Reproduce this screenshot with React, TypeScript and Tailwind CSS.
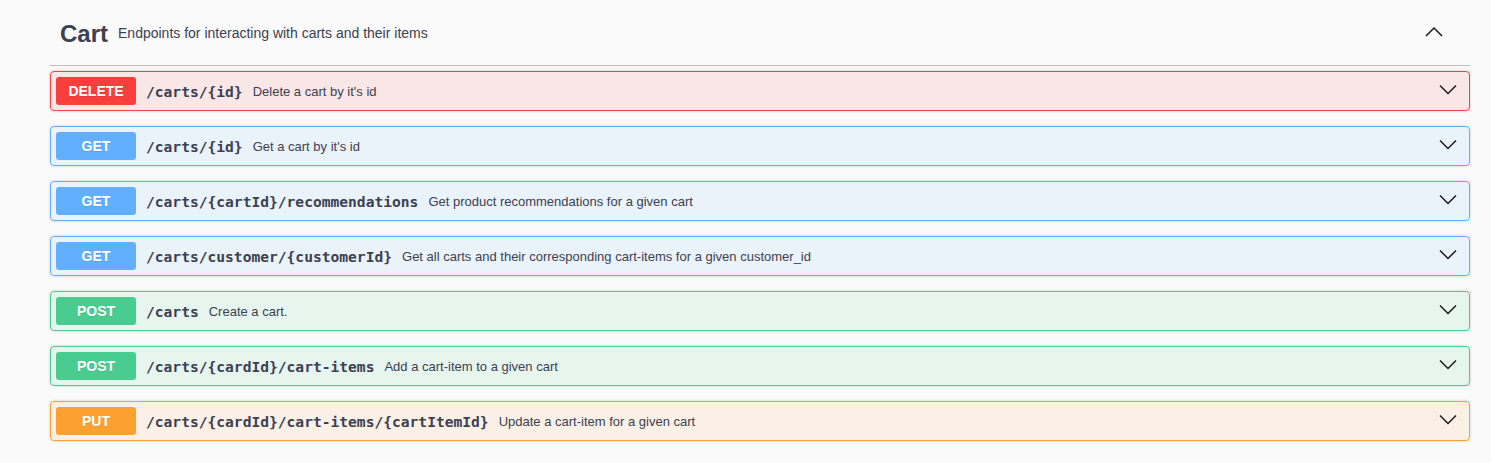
import React from "react";

type Op = {
  method: "DELETE" | "GET" | "POST" | "PUT";
  path: string;
  summary: string;
};

const ops: Op[] = [
  { method: "DELETE", path: "/carts/{id}", summary: "Delete a cart by it's id" },
  { method: "GET", path: "/carts/{id}", summary: "Get a cart by it's id" },
  {
    method: "GET",
    path: "/carts/{cartId}/recommendations",
    summary: "Get product recommendations for a given cart",
  },
  {
    method: "GET",
    path: "/carts/customer/{customerId}",
    summary: "Get all carts and their corresponding cart-items for a given customer_id",
  },
  { method: "POST", path: "/carts", summary: "Create a cart." },
  {
    method: "POST",
    path: "/carts/{cardId}/cart-items",
    summary: "Add a cart-item to a given cart",
  },
  {
    method: "PUT",
    path: "/carts/{cardId}/cart-items/{cartItemId}",
    summary: "Update a cart-item for a given cart",
  },
];

const styles = {
  DELETE: {
    row: "border-[#f93e3e] bg-[#f93e3e]/10",
    badge: "bg-[#f93e3e]",
  },
  GET: {
    row: "border-[#61affe] bg-[#61affe]/10",
    badge: "bg-[#61affe]",
  },
  POST: {
    row: "border-[#49cc90] bg-[#49cc90]/10",
    badge: "bg-[#49cc90]",
  },
  PUT: {
    row: "border-[#fca130] bg-[#fca130]/10",
    badge: "bg-[#fca130]",
  },
};

function Chevron({ up }: { up?: boolean }) {
  return (
    <svg width="20" height="20" viewBox="0 0 20 20" aria-hidden="true">
      <polyline
        points={up ? "2,13 10,5 18,13" : "2,4.5 10,12.5 18,4.5"}
        fill="none"
        stroke="#1a1a1a"
        strokeWidth="1.5"
      />
    </svg>
  );
}

function Operation({ op }: { op: Op }) {
  const s = styles[op.method];
  return (
    <div
      className={`mb-[15px] flex items-center rounded-[4px] border p-[5px] shadow-[0_0_3px_rgba(0,0,0,0.19)] ${s.row}`}
    >
      <span
        className={`min-w-[80px] rounded-[3px] py-[6px] text-center text-[14px] font-bold leading-[16px] text-white [text-shadow:0_1px_0_rgba(0,0,0,0.1)] ${s.badge}`}
      >
        {op.method}
      </span>
      <span className="px-[10px] pt-[2px] font-['DejaVu_Sans_Mono',monospace] text-[14.6px] font-bold text-[#3b4151]">
        {op.path}
      </span>
      <span className="flex-1 pt-[2px] text-[13px] text-[#3b4151]">{op.summary}</span>
      <span className="pr-[6px]">
        <Chevron />
      </span>
    </div>
  );
}

export default function App() {
  return (
    <div className="min-h-[463px] bg-[#fafafa] pl-[50px] pr-[21px] font-['Liberation_Sans',Arial,sans-serif] text-[#3b4151]">
      {/* Tag header */}
      <h3 className="mb-[5px] flex h-[66px] items-center border-b border-[#3b4151]/30 pl-[10px] pr-[26px]">
        <span className="pt-[2px] text-[24px] font-bold">Cart</span>
        <small className="flex-1 px-[10px] pt-[2px] text-[14px]">
          Endpoints for interacting with carts and their items
        </small>
        <Chevron up />
      </h3>

      {/* Operations */}
      <div>
        {ops.map((op, i) => (
          <Operation key={i} op={op} />
        ))}
      </div>
    </div>
  );
}
